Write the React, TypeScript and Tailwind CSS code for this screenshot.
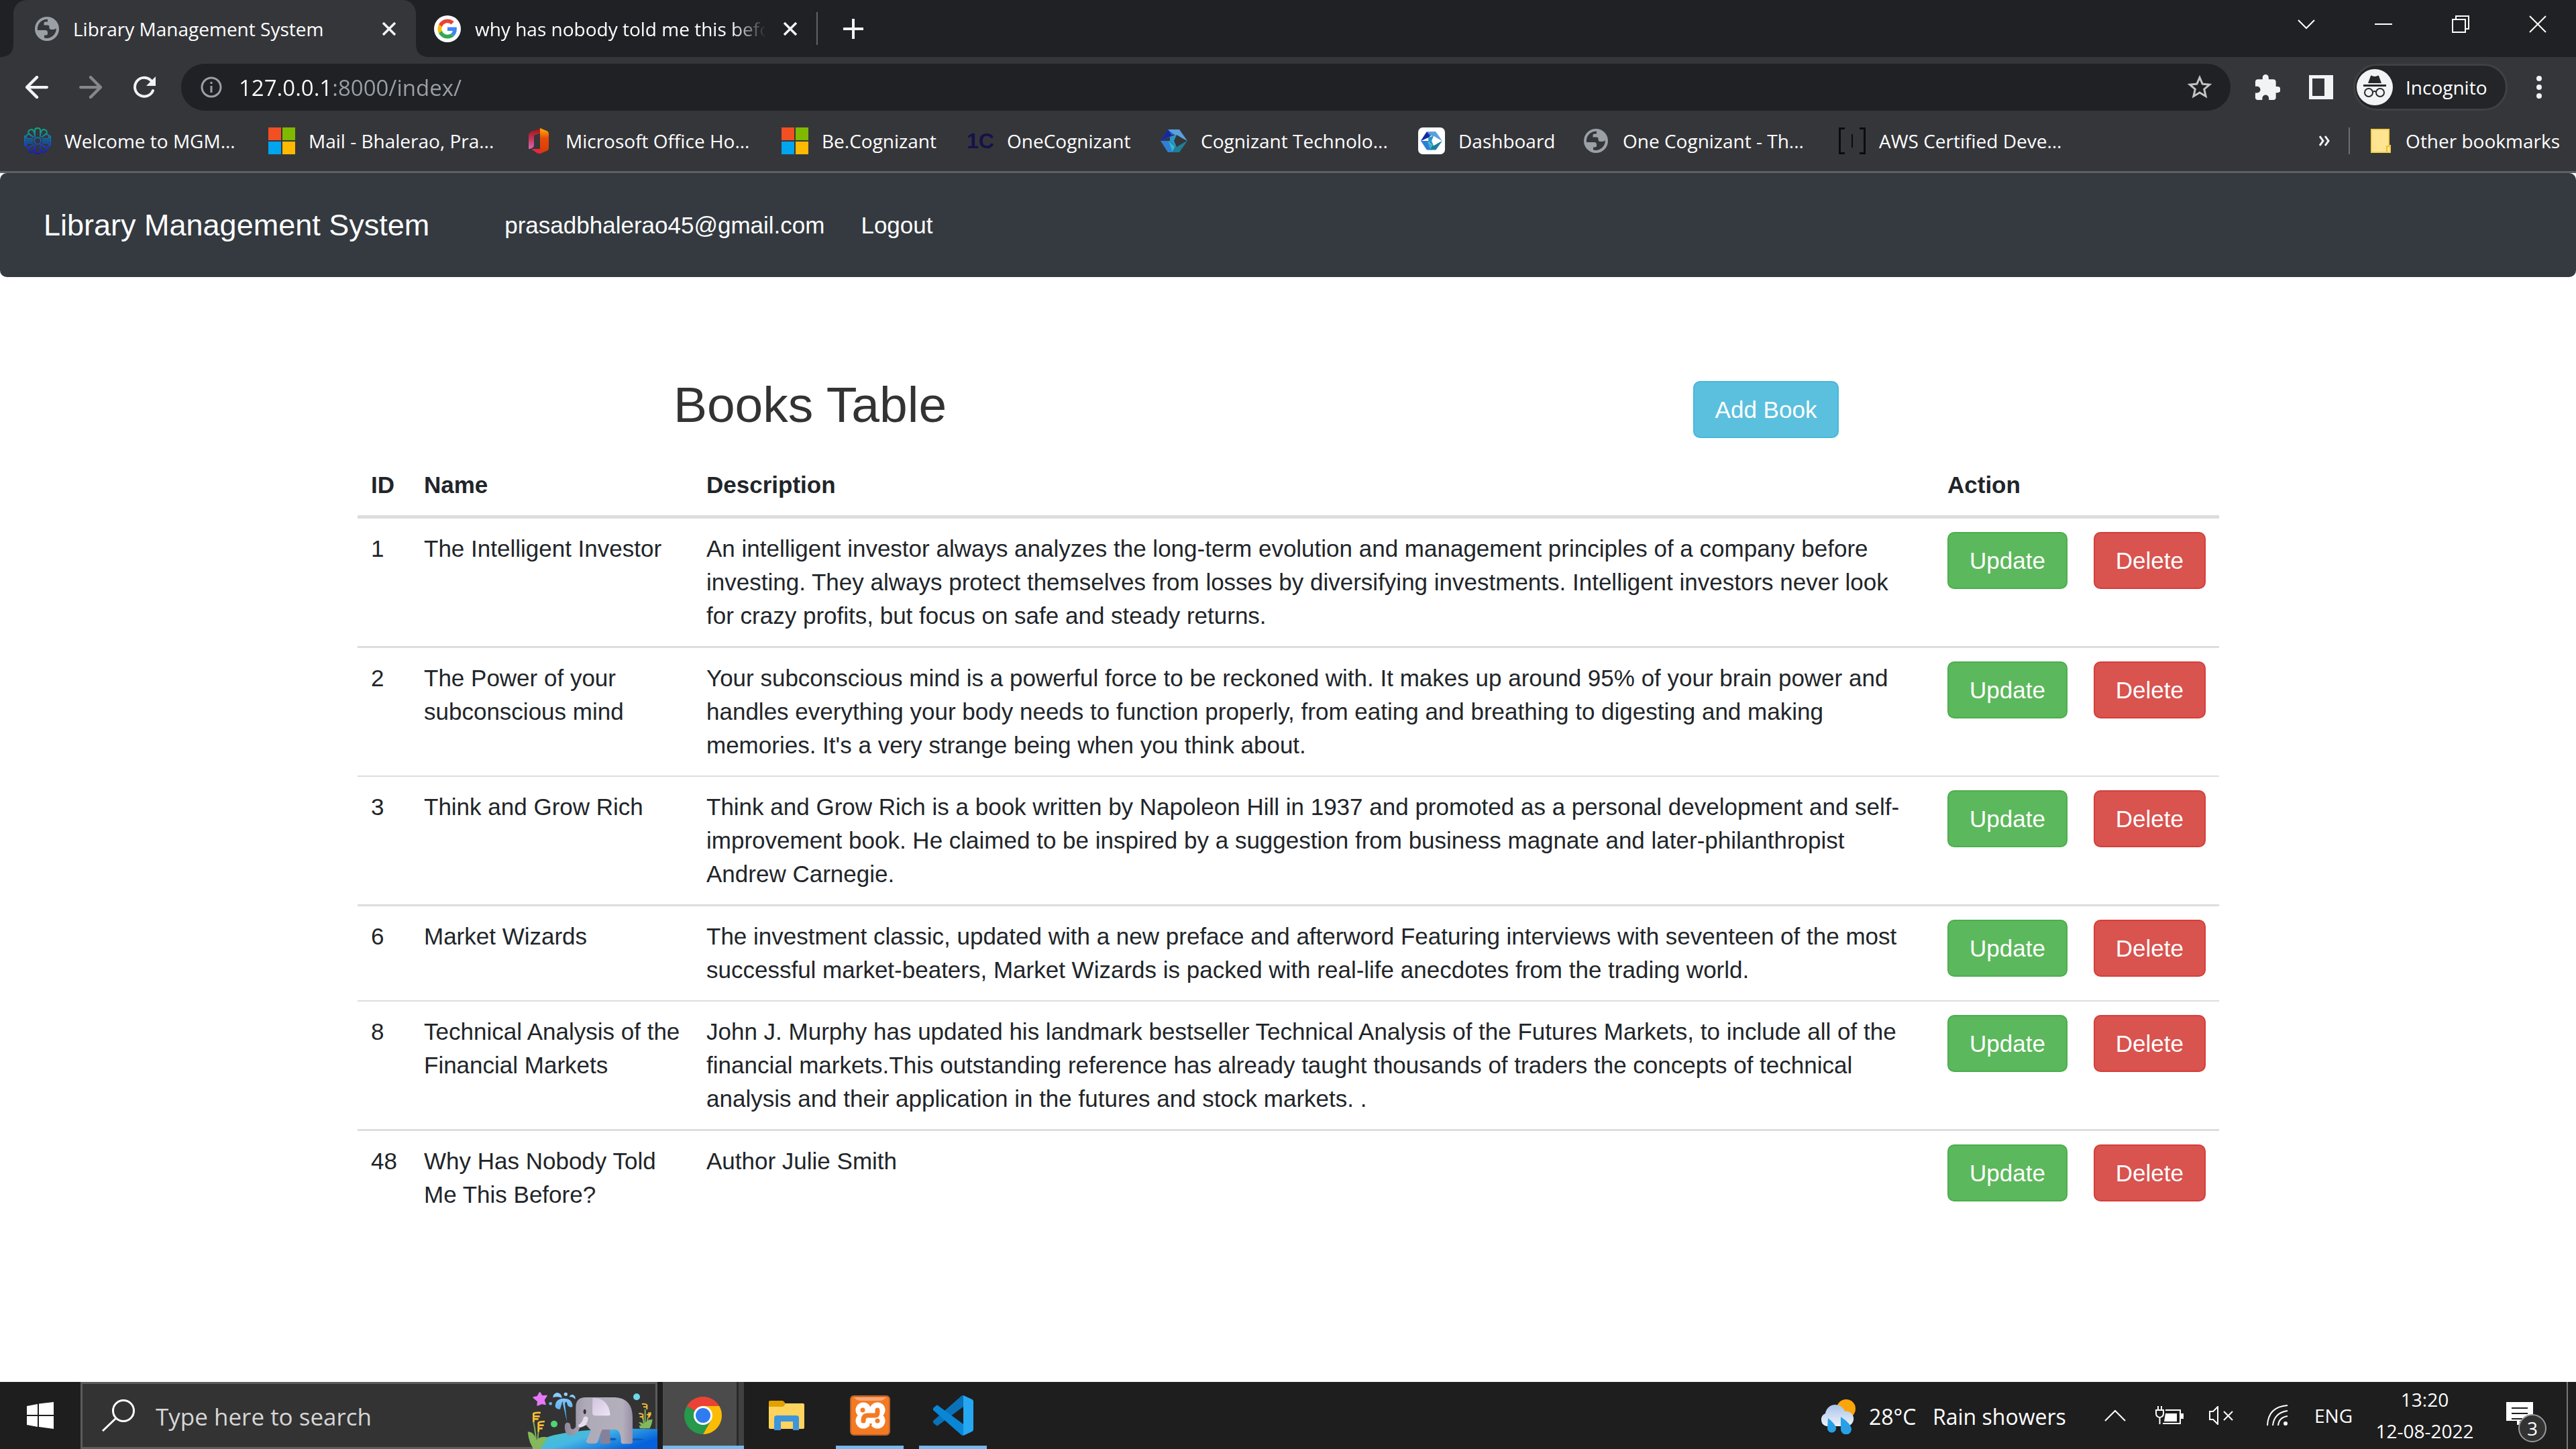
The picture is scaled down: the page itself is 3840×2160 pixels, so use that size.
import type { ReactNode } from "react";

type IconProps = { className?: string };

function GlobeIcon({ className = "size-[36px]" }: IconProps) {
  return (
    <svg viewBox="0 0 36 36" className={className} aria-hidden="true">
      <circle cx="18" cy="18" r="18" fill="#9aa0a6" />
      <path
        d="M19 3.8V7.5h-3.5q-2 0-2 2v3H19q2.5 0 2.5 2.5v1q0 3 3 3h3q3 0 4.3-2A14.2 14.2 0 0 1 14 31.6V27.5h2.5q2.5 0 2.5-2.5v-1.5q0-3.5-3.5-3.5H4A14.2 14.2 0 0 1 19 3.8z"
        fill="#35363a"
      />
    </svg>
  );
}

function GoogleIcon() {
  return (
    <svg viewBox="0 0 40 40" className="size-[40px]" aria-hidden="true">
      <circle cx="20" cy="20" r="20" fill="#fff" />
      <g transform="translate(5.5 5.5) scale(.604)">
        <path fill="#EA4335" d="M24 9.5c3.54 0 6.71 1.22 9.21 3.6l6.85-6.85C35.9 2.38 30.47 0 24 0 14.62 0 6.51 5.38 2.56 13.22l7.98 6.19C12.43 13.72 17.74 9.5 24 9.5z" />
        <path fill="#4285F4" d="M46.98 24.55c0-1.57-.15-3.09-.38-4.55H24v9.02h12.94c-.58 2.96-2.26 5.48-4.78 7.18l7.73 6c4.51-4.18 7.09-10.36 7.09-17.65z" />
        <path fill="#FBBC05" d="M10.53 28.59c-.48-1.45-.76-2.99-.76-4.59s.27-3.14.76-4.59l-7.98-6.19C.92 16.46 0 20.12 0 24c0 3.88.92 7.54 2.56 10.78l7.97-6.19z" />
        <path fill="#34A853" d="M24 48c6.48 0 11.93-2.13 15.89-5.81l-7.73-6c-2.15 1.45-4.92 2.3-8.16 2.3-6.26 0-11.57-4.22-13.47-9.91l-7.98 6.19C6.51 42.62 14.62 48 24 48z" />
      </g>
    </svg>
  );
}

function CrossIcon() {
  return (
    <svg viewBox="0 0 20 20" className="size-[20px]" fill="none" stroke="#f1f3f4" strokeWidth="3.5" aria-hidden="true">
      <path d="M1 1l18 18M19 1L1 19" />
    </svg>
  );
}

function MicrosoftIcon() {
  return (
    <svg viewBox="0 0 40 40" className="size-[40px]" aria-hidden="true">
      <path d="M0 0h19v19H0z" fill="#f25022" />
      <path d="M21 0h19v19H21z" fill="#7fba00" />
      <path d="M0 21h19v19H0z" fill="#00a4ef" />
      <path d="M21 21h19v19H21z" fill="#ffb900" />
    </svg>
  );
}

function FlowerIcon() {
  return (
    <svg viewBox="0 0 40 40" className="size-[40px]" fill="none" stroke="url(#flower)" strokeWidth="2" aria-hidden="true">
      <defs>
        <linearGradient id="flower" x1="0" y1="0" x2="0" y2="40" gradientUnits="userSpaceOnUse">
          <stop offset="0" stopColor="#10b07c" />
          <stop offset=".5" stopColor="#0f62b8" />
          <stop offset="1" stopColor="#1c10c8" />
        </linearGradient>
      </defs>
      <path d="M16 14V4q0-3 4-3t4 3v10M16 26v10q0 3 4 3t4-3V26" />
      <path d="M13 14L6 8q0-5 6-5 3 2 4 9M27 14l7-6q0-5-6-5-3 2-4 9M13 26l-7 6q0 5 6 5 3-2 4-9M27 26l7 6q0 5-6 5-3-2-4-9" />
      <path d="M13 17H4q-3-6 3-7l8 5M27 17h9q3-6-3-7l-8 5M13 23H4q-3 6 3 7l8-5M27 23h9q3 6-3 7l-8-5" />
      <path d="M1 12v16M39 12v16M1 20h12M27 20h12" />
      <circle cx="20" cy="20" r="5" />
    </svg>
  );
}

function OfficeIcon() {
  return (
    <svg viewBox="0 0 40 40" className="size-[40px]" aria-hidden="true">
      <defs>
        <linearGradient id="officeL" x1="0" y1="0" x2="0" y2="1">
          <stop offset="0" stopColor="#a30f12" />
          <stop offset=".55" stopColor="#c43a5e" />
          <stop offset="1" stopColor="#d66db5" />
        </linearGradient>
        <linearGradient id="officeR" x1="0" y1="0" x2="0" y2="1">
          <stop offset="0" stopColor="#ffb300" />
          <stop offset=".4" stopColor="#e84a0c" />
          <stop offset="1" stopColor="#d73b02" />
        </linearGradient>
      </defs>
      <path d="M24 1L9 6q-4 2-4 6v18q0 3 2 2l4-2q2-1 2-4V12l11-4z" fill="url(#officeL)" />
      <path d="M22 1l10 4q3 1 3 5v20q0 4-3 5l-10 4z" fill="url(#officeR)" />
      <path d="M10 32h14v6l-3 1q-3 0-8-4-4-2-3-3z" fill="#e8283c" />
    </svg>
  );
}

function GemIcon({ hole }: { hole: string }) {
  return (
    <>
      <path d="M11 3h17L14 14 0 20z" fill="#2f63c8" />
      <path d="M0 20L11 3l6 9z" fill="#1428a0" />
      <path d="M11 3h17l12 17-18-8z" fill="#5aa0dc" />
      <path d="M0 20h14l6 17h-9z" fill="#2e7fd6" />
      <path d="M12 20l10 9-4 8z" fill="#35b8cf" />
      <path d="M40 20L28 37H17l5-9z" fill="#1f7f96" />
      <path d="M14 14l8-3 4 9-4 9-8-8z" fill="#2796c4" />
      <path d="M24 11l15 9-15 9-4-9z" fill={hole} />
    </>
  );
}

function CognizantIcon() {
  return (
    <svg viewBox="0 0 40 40" className="size-[40px]" aria-hidden="true">
      <GemIcon hole="#35363a" />
    </svg>
  );
}

function DashboardIcon() {
  return (
    <svg viewBox="0 0 40 40" className="size-[40px]" aria-hidden="true">
      <rect width="40" height="40" rx="7" fill="#fff" />
      <g transform="translate(4 4) scale(.8)">
        <GemIcon hole="#fff" />
      </g>
    </svg>
  );
}

function BracketIcon() {
  return (
    <svg viewBox="0 0 40 40" className="size-[40px]" fill="none" stroke="#0b0b0c" strokeWidth="3" aria-hidden="true">
      <path d="M9 1.5H1.5v37H9M31 1.5h7.5v37H31" />
      <path d="M20 10v20" strokeWidth="2" />
    </svg>
  );
}

function IncognitoIcon() {
  return (
    <svg viewBox="0 0 54 54" className="size-[54px]" aria-hidden="true">
      <circle cx="27" cy="27" r="27" fill="#f1f3f4" />
      <path d="M21 10q1-1 2 0 4 2 8 0 1-1 2 0l4 11H17z" fill="#27282c" />
      <path d="M10 23h34v3H10z" fill="#27282c" />
      <g fill="none" stroke="#27282c" strokeWidth="2">
        <circle cx="18" cy="35" r="6" />
        <circle cx="35" cy="35" r="6" />
        <path d="M24 34q3-2 5 0" />
      </g>
    </svg>
  );
}

function ElephantScene() {
  return (
    <svg viewBox="0 12 630 300" className="absolute -right-[3px] -bottom-[3px] h-[100px] w-[210px]" aria-hidden="true">
      <defs>
        <linearGradient id="pond" x1="0" y1="0" x2="1" y2=".5">
          <stop offset="0" stopColor="#49c5b8" />
          <stop offset=".5" stopColor="#46b8e4" />
          <stop offset="1" stopColor="#0562dc" />
        </linearGradient>
        <linearGradient id="skin" x1="0" y1="0" x2="1" y2="0">
          <stop offset="0" stopColor="#8e8799" />
          <stop offset=".3" stopColor="#aeaab8" />
          <stop offset=".85" stopColor="#b3b0bc" />
          <stop offset="1" stopColor="#9a8fa8" />
        </linearGradient>
        <linearGradient id="ear" x1="0" y1="0" x2="1" y2="1">
          <stop offset="0" stopColor="#cfc4dc" />
          <stop offset="1" stopColor="#efe4f6" />
        </linearGradient>
        <linearGradient id="water" x1="0" y1="0" x2="0" y2="1">
          <stop offset="0" stopColor="#8fd0ff" />
          <stop offset="1" stopColor="#3f9de8" />
        </linearGradient>
      </defs>
      <path d="M70 312Q95 262 190 245 350 215 630 223v89z" fill="url(#pond)" />
      <path d="M312 266q30-6 50 4l-40 4zM415 264q30-4 32 5-10 6-32 4zM515 266q50-4 57 4-20 6-57 3z" fill="#0a5fb4" />
      <path d="M376 225h40l4 55q0 9-8 9h-28q-10 0-10-9z" fill="#87809a" />
      <path
        d="M265 125q0-44 44-44h130q80 4 80 90v108q0 10-10 10h-32q-10 0-10-10 0-50-25-54h-58q-8 12-20 52-3 10-12 10h-30q-16-4-9-16l20-42q-12-12-20-22-20-2-34-8l3 20q-10 32-42 32-28-4-24-48 8-16 23-4l4 20q10 12 22-6z"
        fill="url(#skin)"
      />
      <path d="M340 83q70 0 79 74 0 6-8 6h-60q-12-2-12-12z" fill="url(#ear)" />
      <path d="M300 170q14-8 20 4-2 36-34 42-14 0-8-14 16-6 22-32z" fill="#e6dcee" />
      <ellipse cx="305" cy="145" rx="6" ry="11" fill="#41293a" />
      <path d="M76 82l18-4 10-18 10 16 20-2-12 18 6 20-14-4-20 8 2-18z" fill="#e579f8" stroke="#e579f8" strokeWidth="6" strokeLinejoin="round" />
      <circle cx="168" cy="200" r="15" fill="#4fd574" />
      <circle cx="537" cy="79" r="15" fill="#6fd9ea" />
      <path
        d="M163 82q0-18 18-22 20 2 22 24-20-10-40-2zM236 80q4-14 18-10 12 8 8 20-12-14-26-10zM173 122q0-34 36-36 40-2 42 36-12 8-22-4l-6-18-10 10-8-10-10 34q-16 2-22-12zM206 105h10l10 88z"
        fill="url(#water)"
      />
      <circle cx="220" cy="67" r="8" fill="#8fd0ff" />
      <circle cx="152" cy="109" r="7" fill="#62b6f2" />
      <g fill="none" stroke="#7db05a" strokeWidth="6">
        <path d="M76 190q12 60 12 110M98 230l-6 70M566 175l6 45M588 168l-8 50M575 135v80" />
      </g>
      <path
        d="M50 235q30 0 38 40 10-20 48-16-12 40-34 53H78Q56 290 50 235zM546 192q20 0 24 14 10-28 38-26-2 20-12 40h-44l-4-12q6-2 10 0z"
        fill="#84b85c"
      />
      <g fill="none" stroke="#f7bd35" strokeWidth="8">
        <path d="M76 192v-38q6-6 32-4M78 166h26M78 178h20M98 235v-40q6-6 28-6M98 206h24M98 220h18" />
        <path d="M583 135v-20q-6-6-22-4M583 124h-16M565 178v-20q-4-6-18-4M565 168h-14M592 172v-24M600 148l-6 20M582 158h20" strokeWidth="6" />
      </g>
    </svg>
  );
}

function ChromeIcon() {
  return (
    <svg viewBox="0 0 56 56" className="size-[56px]" aria-hidden="true">
      <path d="M28 28L3.750 14A28 28 0 0 1 52.250 14z" fill="#ea4335" />
      <path d="M28 28L3.750 14A28 28 0 0 0 28 56l12-21z" fill="#26994a" />
      <path d="M28 14h24.250A28 28 0 0 1 28 56l12.100-21z" fill="#fbbc05" />
      <circle cx="28" cy="28" r="14" fill="#fff" />
      <circle cx="28" cy="28" r="11" fill="#2f7bf0" />
    </svg>
  );
}

function FolderIcon() {
  return (
    <svg viewBox="0 0 54 46" className="h-[46px] w-[54px]" aria-hidden="true">
      <path d="M1 12V3q0-2 2-2h18q2 0 4 3l3 4v5z" fill="#e2a100" />
      <path d="M1 10h20q3 0 5-5h26q2 0 2 2v34q0 2-2 2H3q-2 0-2-2z" fill="#ffd45e" />
      <path d="M9 45V27q0-4 4-4h29q4 0 4 4v18h-9V32H19v13z" fill="#3d95dc" />
    </svg>
  );
}

function XamppIcon() {
  return (
    <svg viewBox="0 0 60 60" className="size-[60px]" aria-hidden="true">
      <rect x="1" y="1" width="58" height="58" rx="5" fill="#f47a22" stroke="#b9622c" strokeWidth="2" />
      <path d="M6 3h48q-4 5-10 5H16Q10 8 6 3z" fill="#f6a877" />
      <g fill="#fff">
        <circle cx="20" cy="22" r="11.5" />
        <circle cx="41" cy="22" r="11.5" />
        <circle cx="20" cy="38" r="11.5" />
        <circle cx="41" cy="38" r="11.5" />
        <path d="M19 20h22v20H19z" />
      </g>
      <g fill="none" stroke="#f47a22" strokeWidth="7" strokeLinecap="round" strokeLinejoin="round">
        <path d="M41 22v4q0 4-4 4H26q-6 0-6 8M41 38h0M19 22h0" />
      </g>
      <path d="M29 42h4l-2 7zM28 12h4l-2 5z" fill="#f47a22" />
    </svg>
  );
}

function VsCodeIcon() {
  return (
    <svg viewBox="0 0 60 60" className="size-[60px]" aria-hidden="true">
      <path d="M45 0v17L7 45q-1 1-2 0l-5-4q-1-2 0-3L42 1q1-1 3-1z" fill="#0a72b8" />
      <path d="M45 60V43L7 15q-1-1-2 0l-5 4q-1 2 0 3l42 37q1 1 3 1z" fill="#0a86d6" />
      <path d="M45 0l13 6q2 1 2 3v42q0 2-2 3l-13 6z" fill="#25a7f2" />
    </svg>
  );
}

function WeatherIcon() {
  return (
    <svg viewBox="0 0 54 52" className="h-[52px] w-[54px]" aria-hidden="true">
      <defs>
        <linearGradient id="cloud" x1="0" y1="0" x2="0" y2="1">
          <stop offset="0" stopColor="#a9c3ea" />
          <stop offset="1" stopColor="#eef2fa" />
        </linearGradient>
      </defs>
      <circle cx="40" cy="14" r="14" fill="#fba50c" />
      <path d="M11 40A10 10 0 0 1 9 21 15 15 0 0 1 38 18a11 11 0 0 1 4 22z" fill="url(#cloud)" />
      <path d="M13 28q10 8 12 14a6 6 0 0 1-13 2zM32 26q15 10 16 18a8 8 0 0 1-16 1z" fill="#27a0e6" />
    </svg>
  );
}

function PowerIcon() {
  return (
    <svg viewBox="0 0 42 28" className="h-[28px] w-[42px]" fill="none" stroke="#fff" strokeWidth="2" aria-hidden="true">
      <path d="M4 0v6M9 0v6M1 6h11v5q0 5-5.5 6Q1 16 1 11zM6.5 17v10M15 6h22v20H11" />
      <path d="M15 11h17v12H13z" fill="#fff" stroke="none" />
      <path d="M38 11h4v8h-4z" fill="#fff" stroke="none" />
    </svg>
  );
}

const bookmarks: { label: string; icon: ReactNode; width: string }[] = [
  { label: "Welcome to MGM...", icon: <FlowerIcon />, width: "w-[364px]" },
  { label: "Mail - Bhalerao, Pra...", icon: <MicrosoftIcon />, width: "w-[383px]" },
  { label: "Microsoft Office Ho...", icon: <OfficeIcon />, width: "w-[382px]" },
  { label: "Be.Cognizant", icon: <MicrosoftIcon />, width: "w-[276px]" },
  {
    label: "OneCognizant",
    icon: <span className="w-[40px] text-center font-['Liberation_Sans',sans-serif] text-[32px] font-bold leading-none text-[#14124a]">1C</span>,
    width: "w-[289px]",
  },
  { label: "Cognizant Technolo...", icon: <CognizantIcon />, width: "w-[384px]" },
  { label: "Dashboard", icon: <DashboardIcon />, width: "w-[245px]" },
  { label: "One Cognizant - Th...", icon: <GlobeIcon className="mx-[2px] size-[36px]" />, width: "w-[382px]" },
  { label: "AWS Certified Deve...", icon: <BracketIcon />, width: "w-[383px]" },
];

const books = [
  {
    id: 1,
    name: "The Intelligent Investor",
    description:
      "An intelligent investor always analyzes the long-term evolution and management principles of a company before investing. They always protect themselves from losses by diversifying investments. Intelligent investors never look for crazy profits, but focus on safe and steady returns.",
  },
  {
    id: 2,
    name: "The Power of your subconscious mind",
    description:
      "Your subconscious mind is a powerful force to be reckoned with. It makes up around 95% of your brain power and handles everything your body needs to function properly, from eating and breathing to digesting and making memories. It's a very strange being when you think about.",
  },
  {
    id: 3,
    name: "Think and Grow Rich",
    description:
      "Think and Grow Rich is a book written by Napoleon Hill in 1937 and promoted as a personal development and self-improvement book. He claimed to be inspired by a suggestion from business magnate and later-philanthropist Andrew Carnegie.",
  },
  {
    id: 6,
    name: "Market Wizards",
    description:
      "The investment classic, updated with a new preface and afterword Featuring interviews with seventeen of the most successful market-beaters, Market Wizards is packed with real-life anecdotes from the trading world.",
  },
  {
    id: 8,
    name: "Technical Analysis of the Financial Markets",
    description:
      "John J. Murphy has updated his landmark bestseller Technical Analysis of the Futures Markets, to include all of the financial markets.This outstanding reference has already taught thousands of traders the concepts of technical analysis and their application in the futures and stock markets. .",
  },
  { id: 48, name: "Why Has Nobody Told Me This Before?", description: "Author Julie Smith" },
];

function TabStrip() {
  return (
    <div className="flex h-[85px] bg-[#202124] pl-[20px] text-[28px] text-white">
      <div className="relative flex w-[600px] items-center rounded-t-[20px] bg-[#35363a] pl-[32px] pr-[24px]">
        <svg viewBox="0 0 20 20" className="absolute -left-[20px] bottom-0 size-[20px]" aria-hidden="true">
          <path d="M20 0v20H0Q20 20 20 0z" fill="#35363a" />
        </svg>
        <svg viewBox="0 0 20 20" className="absolute -right-[20px] bottom-0 size-[20px]" aria-hidden="true">
          <path d="M0 0v20h20Q0 20 0 0z" fill="#35363a" />
        </svg>
        <GlobeIcon />
        <button className="ml-[21px] flex-1 whitespace-nowrap text-left">Library Management System</button>
        <button className="grid size-[32px] place-items-center" aria-label="Close Library Management System">
          <CrossIcon />
        </button>
      </div>
      <div className="flex w-[597px] items-center pl-[27px] pr-[23px]">
        <GoogleIcon />
        <button className="ml-[21px] w-[434px] overflow-hidden whitespace-nowrap text-left [mask-image:linear-gradient(to_right,#000_88%,transparent)]">
          why has nobody told me this before
        </button>
        <button className="ml-auto grid size-[32px] place-items-center" aria-label="Close search tab">
          <CrossIcon />
        </button>
      </div>
      <div className="my-[18px] w-[2px] self-stretch bg-[#5f6368]" />
      <button className="ml-[33px] grid w-[40px] place-items-center" aria-label="New tab">
        <svg viewBox="0 0 30 30" className="size-[30px]" stroke="#f1f3f4" strokeWidth="4" aria-hidden="true">
          <path d="M15 0v30M0 15h30" />
        </svg>
      </button>
      <div className="ml-auto flex h-[72px] [&>button]:grid [&>button]:w-[115px] [&>button]:place-items-center">
        <button aria-label="Search tabs">
          <svg viewBox="0 0 26 26" className="size-[26px]" fill="none" stroke="#fff" strokeWidth="2" aria-hidden="true">
            <path d="M1 7l12 12L25 7" />
          </svg>
        </button>
        <button aria-label="Minimize">
          <svg viewBox="0 0 26 26" className="size-[26px]" stroke="#fff" strokeWidth="2" aria-hidden="true">
            <path d="M0 13h26" />
          </svg>
        </button>
        <button aria-label="Restore">
          <svg viewBox="0 0 26 26" className="size-[26px]" fill="none" stroke="#fff" strokeWidth="2" aria-hidden="true">
            <path d="M1 6h19v19H1zM6 6V1h19v19h-5" />
          </svg>
        </button>
        <button aria-label="Close window">
          <svg viewBox="0 0 26 26" className="size-[26px]" stroke="#fff" strokeWidth="2" aria-hidden="true">
            <path d="M1 1l24 24M25 1L1 25" />
          </svg>
        </button>
      </div>
    </div>
  );
}

function Toolbar() {
  return (
    <div className="flex bg-[#35363a] py-[10px] pl-[15px] pr-[20px]">
      <button className="grid w-[80px] place-items-center" aria-label="Back">
        <svg viewBox="0 0 32 32" className="size-[34px]" fill="none" stroke="#f1f3f4" strokeWidth="4" strokeLinecap="round" aria-hidden="true">
          <path d="M30 16H2M16 2L2 16l14 14" />
        </svg>
      </button>
      <button className="grid w-[80px] place-items-center" aria-label="Forward" disabled>
        <svg viewBox="0 0 32 32" className="size-[34px]" fill="none" stroke="#86878a" strokeWidth="4" strokeLinecap="round" aria-hidden="true">
          <path d="M2 16h28M16 2l14 14-14 14" />
        </svg>
      </button>
      <button className="grid w-[80px] place-items-center" aria-label="Reload">
        <svg viewBox="0 0 34 34" className="size-[34px]" aria-hidden="true">
          <path d="M30 22A14 14 0 1 1 26 6l3 3" fill="none" stroke="#f1f3f4" strokeWidth="4" strokeLinecap="round" />
          <path d="M34 1v14H20z" fill="#f1f3f4" />
        </svg>
      </button>
      <div className="ml-[15px] flex h-[70px] flex-1 items-center rounded-full bg-[#202124] pl-[29px] pr-[24px]">
        <svg viewBox="0 0 32 32" className="size-[32px]" aria-hidden="true">
          <circle cx="16" cy="16" r="14" fill="none" stroke="#9aa0a6" strokeWidth="3" />
          <path d="M14.5 8h3v3h-3zM14.5 14h3v10h-3z" fill="#9aa0a6" />
        </svg>
        <input
          aria-label="Address"
          defaultValue="127.0.0.1:8000/index/"
          className="ml-[25px] h-full min-w-0 flex-1 bg-[linear-gradient(to_right,#fff_133px,#9aa0a6_133px)] bg-clip-text text-[33px] text-transparent outline-none"
        />
        <button aria-label="Bookmark this page">
          <svg viewBox="0 0 24 24" className="size-[44px]" fill="#c4c4c4" aria-hidden="true">
            <path d="M22 9.240l-7.190-.62L12 2 9.190 8.630 2 9.240l5.460 4.730L5.820 21 12 17.270 18.180 21l-1.630-7.030L22 9.240zM12 15.400l-3.760 2.270 1-4.280-3.320-2.880 4.380-.38L12 6.100l1.710 4.040 4.380.38-3.320 2.880 1 4.280L12 15.400z" />
          </svg>
        </button>
      </div>
      <button className="ml-[15px] grid w-[80px] place-items-center" aria-label="Extensions">
        <svg viewBox="1.5 1 21 21" className="size-[38px]" fill="#f1f3f4" aria-hidden="true">
          <path d="M20.5 11H19V7c0-1.100-.9-2-2-2h-4V3.500C13 2.120 11.880 1 10.500 1S8 2.120 8 3.500V5H4c-1.100 0-1.990.9-1.990 2v3.800H3.500c1.490 0 2.700 1.210 2.700 2.700s-1.210 2.700-2.700 2.700H2V20c0 1.100.9 2 2 2h3.800v-1.500c0-1.490 1.210-2.700 2.700-2.700 1.490 0 2.700 1.210 2.700 2.700V22H17c1.100 0 2-.9 2-2v-4h1.500c1.380 0 2.500-1.120 2.500-2.500S21.880 11 20.500 11z" />
        </svg>
      </button>
      <button className="grid w-[80px] place-items-center" aria-label="Side panel">
        <svg viewBox="0 0 36 36" className="size-[36px]" aria-hidden="true">
          <path fillRule="evenodd" d="M0 0h36v36H0zM5 5v26h18V5z" fill="#f1f3f4" />
        </svg>
      </button>
      <button className="ml-[8px] flex w-[230px] items-center rounded-full border-[3px] border-[#404144] bg-[#242528] pl-[2px] text-[28px] text-white">
        <IncognitoIcon />
        <span className="ml-[19px]">Incognito</span>
      </button>
      <button className="ml-[12px] grid w-[70px] place-items-center" aria-label="Menu">
        <svg viewBox="0 0 8 34" className="h-[34px] w-[8px]" fill="#f1f3f4" aria-hidden="true">
          <circle cx="4" cy="4" r="4" />
          <circle cx="4" cy="17" r="4" />
          <circle cx="4" cy="30" r="4" />
        </svg>
      </button>
    </div>
  );
}

function BookmarksBar() {
  return (
    <nav className="flex border-b-[3px] border-[#5f6063] bg-[#35363a] pb-[10px] pl-[36px] pr-[24px] text-[28px] text-white" aria-label="Bookmarks">
      {bookmarks.map((b) => (
        <a key={b.label} href="#" className={`flex h-[70px] items-center gap-[20px] whitespace-nowrap ${b.width}`}>
          {b.icon}
          <span>{b.label}</span>
        </a>
      ))}
      <button className="ml-auto mr-[28px]" aria-label="More bookmarks">
        <svg viewBox="0 0 16 16" className="size-[16px]" fill="none" stroke="#f1f3f4" strokeWidth="3" aria-hidden="true">
          <path d="M1 1l5 7-5 7M9 1l5 7-5 7" />
        </svg>
      </button>
      <div className="my-[15px] w-[2px] bg-[#6c6e72]" />
      <a href="#" className="ml-[31px] flex items-center gap-[22px] whitespace-nowrap">
        <svg viewBox="0 0 30 36" className="h-[36px] w-[30px]" aria-hidden="true">
          <path d="M1 1h26v24h2v10H1z" fill="#ffe591" stroke="#f0cf4e" strokeWidth="2" />
          <path d="M24 34v-8h4" fill="none" stroke="#e8bf33" strokeWidth="2" />
        </svg>
        <span>Other bookmarks</span>
      </a>
    </nav>
  );
}

const actionButton = "h-[85px] rounded-[10px] border-2 px-[31px] leading-[50px] text-white";

function Page() {
  return (
    <div className="flex-1 bg-white font-['Liberation_Sans',Arial,sans-serif] text-[35px] leading-[50px] text-[#212529]">
      <nav className="flex h-[155px] items-center rounded-[10px] bg-[#343a40] pl-[65px] text-white">
        <a href="#" className="text-[45px]">Library Management System</a>
        <a href="#" className="ml-[112px]">prasadbhalerao45@gmail.com</a>
        <a href="#" className="ml-[54px]">Logout</a>
      </nav>
      <main className="mx-auto mt-[149px] max-w-[2850px]">
        <div className="grid h-[116px] grid-cols-2 items-start text-center">
          <h2 className="text-[75px] leading-[83px] text-[#333]">Books Table</h2>
          <div className="pt-[6px]">
            <button className={`${actionButton} border-[#46b8da] bg-[#5bc0de]`}>Add Book</button>
          </div>
        </div>
        <div className="pl-[38px] pr-[37px]">
          <table className="w-full table-fixed border-separate border-spacing-0 text-left">
            <colgroup>
              <col className="w-[79px]" />
              <col className="w-[421px]" />
              <col />
              <col className="w-[425px]" />
            </colgroup>
            <thead>
              <tr className="[&>th]:border-b-[5px] [&>th]:border-[#ddd] [&>th]:p-[20px]">
                <th scope="col">ID</th>
                <th scope="col">Name</th>
                <th scope="col">Description</th>
                <th scope="col">Action</th>
              </tr>
            </thead>
            <tbody className="[&>tr:nth-child(even)>td]:border-t-[3px] [&>tr:nth-child(n+3):nth-child(odd)>td]:border-t-2">
              {books.map((book) => (
                <tr key={book.id} className="align-top [&>td]:border-[#ddd] [&>td]:p-[20px]">
                  <td className="whitespace-nowrap">{book.id}</td>
                  <td className="pr-[10px]!">{book.name}</td>
                  <td>{book.description}</td>
                  <td>
                    <div className="flex justify-between">
                      <button className={`${actionButton} border-[#4cae4c] bg-[#5cb85c]`}>Update</button>
                      <button className={`${actionButton} border-[#d43f3a] bg-[#d9534f]`}>Delete</button>
                    </div>
                  </td>
                </tr>
              ))}
            </tbody>
          </table>
        </div>
      </main>
    </div>
  );
}

function Taskbar() {
  return (
    <footer className="flex h-[100px] bg-[#1e1e1e] text-white">
      <button className="grid w-[120px] place-items-center" aria-label="Start">
        <svg viewBox="0 0 40 40" className="size-[40px]" fill="#fff" aria-hidden="true">
          <path d="M0 6l16-3v16H0zM18 2.500L40 0v19H18zM0 21h16v16L0 34zM18 21h22v19l-22-3z" />
        </svg>
      </button>
      <label className="relative flex w-[860px] items-center border-[3px] border-[#5c5c5c] bg-[#333] pl-[29px]">
        <svg viewBox="0 0 50 48" className="h-[48px] w-[50px]" fill="none" stroke="#fff" strokeWidth="3" aria-hidden="true">
          <circle cx="32" cy="17" r="15.5" />
          <path d="M21 28L1 47" />
        </svg>
        <input
          aria-label="Type here to search"
          placeholder="Type here to search"
          className="ml-[30px] h-full w-[420px] bg-transparent pt-[2px] text-[35px] outline-none placeholder:text-[#d6d6d6]"
        />
        <ElephantScene />
      </label>
      <button className="ml-[8px] flex w-[121px] border-b-[5px] border-[#76b9ed]" aria-label="Chrome">
        <span className="grid h-full w-[110px] place-items-center bg-[#4b4b4b] pt-[5px]">
          <span className="ml-[10px]"><ChromeIcon /></span>
        </span>
        <span className="h-full w-[3px] bg-[#2b2b2b]" />
        <span className="h-full w-[8px] bg-[#414141]" />
      </button>
      <button className="ml-[12px] grid w-[101px] place-items-center" aria-label="File Explorer">
        <FolderIcon />
      </button>
      <button className="ml-[24px] grid w-[101px] place-items-center border-b-[5px] border-[#76b9ed] pt-[5px]" aria-label="XAMPP">
        <XamppIcon />
      </button>
      <button className="ml-[23px] grid w-[101px] place-items-center border-b-[5px] border-[#76b9ed] pt-[5px]" aria-label="Visual Studio Code">
        <VsCodeIcon />
      </button>

      <div className="ml-auto flex items-center whitespace-nowrap">
        <button className="flex h-full items-center pt-[4px] text-left text-[32px]">
          <WeatherIcon />
          <span className="ml-[20px] w-[95px]">28°C</span>
          <span className="w-[256px]">Rain showers</span>
        </button>
        <button className="w-[76px]" aria-label="Show hidden icons">
          <svg viewBox="0 0 32 18" className="h-[18px] w-[32px]" fill="none" stroke="#fff" strokeWidth="2" aria-hidden="true">
            <path d="M1 17L16 2l15 15" />
          </svg>
        </button>
        <button className="w-[80px]" aria-label="Battery">
          <PowerIcon />
        </button>
        <button className="w-[86px]" aria-label="Volume muted">
          <svg viewBox="0 0 38 28" className="h-[28px] w-[38px]" fill="none" stroke="#fff" strokeWidth="2" aria-hidden="true">
            <path d="M1 8h5l7-7v26l-7-7H1zM22 8l13 13M35 8L22 21" />
          </svg>
        </button>
        <button className="w-[71px]" aria-label="Network">
          <svg viewBox="0 0 32 32" className="size-[32px]" fill="none" stroke="#fff" strokeWidth="2" aria-hidden="true">
            <path d="M1 31Q2 3 31 1M9 31Q11 12 31 9M17 31Q18 19 31 17" />
            <circle cx="28" cy="28" r="3" fill="#fff" stroke="none" />
          </svg>
        </button>
        <button className="w-[90px] text-left text-[28px]">ENG</button>
        <button className="h-full w-[149px] text-center text-[28px] leading-[47px]">
          13:20
          <br />
          12-08-2022
        </button>
        <button className="ml-[47px] mr-[30px] h-full pt-[20px]" aria-label="3 notifications">
          <span className="relative block h-[60px] w-[60px]">
            <svg viewBox="0 0 40 40" className="size-[40px]" aria-hidden="true">
              <path d="M0 0h40v28H20v6h-4v-6H0z" fill="#fff" />
              <path d="M8 9h24M8 17h24M8 25h16" stroke="#1e1e1e" strokeWidth="2" />
            </svg>
            <span className="absolute bottom-0 right-0 grid size-[42px] place-items-center rounded-full border-2 border-[#9a9a9a] bg-[#333] text-[28px] leading-none">
              3
            </span>
          </span>
        </button>
        <div className="mr-[12px] h-full w-[2px] bg-[#777]" />
      </div>
    </footer>
  );
}

export default function App() {
  return (
    <div className="flex min-h-screen flex-col bg-white font-['Open_Sans','Noto_Sans',sans-serif]">
      <header>
        <TabStrip />
        <Toolbar />
        <BookmarksBar />
      </header>
      <Page />
      <Taskbar />
    </div>
  );
}
